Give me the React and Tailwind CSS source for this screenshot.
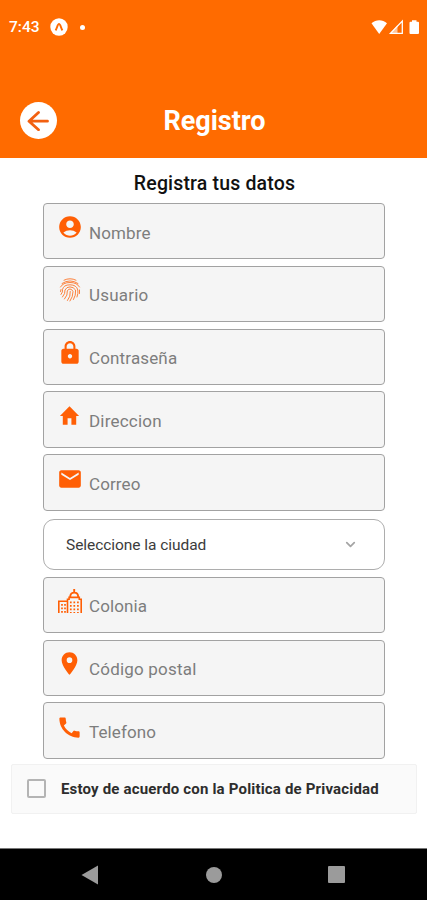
import { useState } from "react";
import {
  MdAccountCircle,
  MdCall,
  MdEmail,
  MdLocationOn,
  MdLock,
} from "react-icons/md";
import { ChevronDown } from "lucide-react";

const HomeIcon = () => (
  <svg width="23" height="26" viewBox="0 0 24 24" preserveAspectRatio="none" fill="currentColor">
    <path d="M10 20v-6h4v6h5v-8h3L12 3 2 12h3v8z" />
  </svg>
);

const FingerprintIcon = () => (
  <svg width="22" height="26" viewBox="0 0 22 26" fill="none" stroke="currentColor" strokeWidth="0.9" strokeLinecap="round" opacity="0.85">
    <path d="M5 3.200Q11 .200 17 3.200M3 6.500Q11 1.200 19 6.500M1.500 10Q4 5.500 11 5.500T20.500 10" />
    <path d="M2 17.500Q4 15 3.500 12.500 4.500 7.800 11 7.800T18.800 13Q19.500 16 18 20" />
    <path d="M3.500 20Q6.500 16.500 6 13 7.500 9.800 11 9.900T16.600 13Q17 18.500 14.500 22.500" />
    <path d="M5.500 22Q9 18 8.300 14 9.200 12 11 12t3 2.500Q14 20 11 24" />
    <path d="M8.500 23.500Q11.800 19.500 11.300 14.500M1.500 14.500 2 12.500M20.500 13v3.500" />
  </svg>
);

const CityIcon = () => (
  <svg width="26" height="26" viewBox="0 0 26 26" fill="none" stroke="currentColor">
    <path strokeWidth="1.6" d="M1.8 25V13.2H10M10.5 25V11.2h1.6V9.4h10.2v1.8h1.9V25" />
    <path strokeWidth="1.9" d="M13.2 9c0-3 1.6-4.4 4-4.4S21.2 6 21.2 9M17.2 4.6V1" />
    <path strokeWidth="1.7" strokeDasharray="1.8 1.7" d="M5 16v9M8 16v9M13.8 13.5V25M17.3 13.5V25M20.9 13.5V25" />
  </svg>
);

const topFields = [
  { label: "Nombre", icon: <MdAccountCircle size={26} />, pos: "top-[10.5px] -left-[0.5px]", text: "tracking-[0.1px]" },
  { label: "Usuario", icon: <FingerprintIcon />, pos: "top-[10px] -left-[0.5px]", text: "tracking-[0.2px]" },
  { label: "Contraseña", icon: <MdLock size={26} />, pos: "top-[10px] -left-[0.5px]", text: "tracking-[0.15px]" },
  { label: "Direccion", icon: <HomeIcon />, pos: "top-[10.5px] -left-[1px]", text: "tracking-[0.2px]" },
  { label: "Correo", icon: <MdEmail size={26} />, pos: "top-[10.5px] -left-[0.5px]", text: "tracking-[0.1px]" },
];

const bottomFields = [
  { label: "Colonia", icon: <CityIcon />, pos: "top-[10.5px] -left-[0.5px]", text: "tracking-[0.1px]" },
  { label: "Código postal", icon: <MdLocationOn size={27} />, pos: "top-[9.5px] -left-[1px]", text: "tracking-[0.2px]" },
  { label: "Telefono", icon: <MdCall size={27} />, pos: "top-[10.5px] -left-[0.5px]", text: "tracking-[0.1px]" },
];

const Field = ({ field }) => (
  <label className="flex h-[56.5px] items-center rounded border border-[#a2a2a2] bg-[#f5f5f5]">
    <span className="flex h-full w-[45px] justify-center pl-[7px] text-[#ff5f05]">
      <span className={`relative h-fit ${field.pos}`}>{field.icon}</span>
    </span>
    <span className={`pt-[3px] text-[17px] leading-5 text-[#7d7d7d] ${field.text}`}>
      {field.label}
    </span>
  </label>
);

const StatusBar = () => (
  <div className="flex h-[54px] items-center pl-[9px] pr-[8px] text-white">
    <span className="w-[32px] pt-[2px] text-[15.5px] font-medium">7:43</span>
    <svg className="ml-[9px]" width="18" height="18" viewBox="0 0 18 18">
      <circle cx="9" cy="9" r="8.7" fill="#fff" />
      <path d="M5.5 12.3C7 10.5 7.5 6 9 6s2 4.5 3.5 6.3" fill="none" stroke="#ff6b00" strokeWidth="1.9" />
    </svg>
    <span className="ml-[12px] size-[5px] rounded-full bg-white" />
    <svg className="ml-auto mr-[-1px]" width="50" height="16" viewBox="0 0 50 16" fill="#fff">
      <path d="M1.500 4.200C6 .200 12.500.200 17 4.200L9.200 15z" />
      <path d="M32.300 2v12.300H20.500z" fill="none" stroke="#fff" strokeWidth="1.3" />
      <path d="M27.500 6 19.500 15h8z" fill="#fff" fillOpacity="0.6" />
      <path d="M40.500 2.800h1.500V1.300h4.500V2.800h1.500q1 0 1 1v10.200q0 1-1 1h-7.500q-1 0-1-1V3.800q0-1 1-1z" />
    </svg>
  </div>
);

const NavigationBar = () => (
  <div className="mt-auto flex h-[52px] items-center border-t border-[#777] bg-black pl-[81px] text-[#9b9b9b]">
    <svg width="17" height="20" viewBox="0 0 17 20" fill="currentColor">
      <path d="M.5 10 17 .5v19z" />
    </svg>
    <span className="ml-[108px] size-4 rounded-full bg-[#9b9b9b]" />
    <span className="ml-[106px] size-[17px] rounded-[1px] bg-[#9b9b9b]" />
  </div>
);

export default function App() {
  const [accepted, setAccepted] = useState(false);

  return (
    <div className="flex h-[900px] w-[427px] flex-col overflow-hidden bg-white font-['Roboto',sans-serif]">
      <header className="h-[158px] bg-[#ff6b00]">
        <StatusBar />
        <div className="mt-[48px] grid grid-cols-[80px_1fr_80px] items-center">
          <button className="ml-[19.5px] flex size-[37px] items-center justify-center rounded-full bg-white text-[#f26011]">
            <svg width="22" height="20" viewBox="0 0 22 20" fill="none" stroke="currentColor" strokeWidth="2.8" strokeLinecap="round" strokeLinejoin="round">
              <path d="M11.5 1.500 2 10.200l9.500 8.500M2.500 10.200H20.500" />
            </svg>
          </button>
          <h1 className="pl-0.5 text-center text-[27px] font-bold leading-8 text-white">Registro</h1>
        </div>
      </header>

      <main className="px-[11px]">
        <h2 className="mt-[14px] pl-0.5 text-center text-[19.5px] font-medium leading-6 tracking-[0.17px] text-[#111]">
          Registra tus datos
        </h2>
        <div className="ml-8 mt-[6.8px] flex w-[342px] flex-col gap-[6.4px]">
          {topFields.map((field) => (
            <Field key={field.label} field={field} />
          ))}
          <button className="mt-[2px] flex h-[51px] items-center justify-between rounded-[11px] border border-[#adadad] bg-white pl-[22px] pr-[26px] text-[15.5px] tracking-[-0.05px] text-[#3c3c3c]">
            <span className="pt-[1px]">Seleccione la ciudad</span>
            <ChevronDown size={15} strokeWidth={2.8} color="#a5a5a5" />
          </button>
          {bottomFields.map((field) => (
            <Field key={field.label} field={field} />
          ))}
        </div>
        <label className="mt-[5px] flex h-[50px] w-[406px] items-center rounded-[2px] border border-[#f1f1f1] bg-[#fafafa] pl-[15px]">
          <input
            type="checkbox"
            checked={accepted}
            onChange={() => setAccepted(!accepted)}
            className="size-[19px] appearance-none rounded-[2px] border-2 border-[#b4b4b4] checked:bg-[#ff6b00]"
          />
          <span className="ml-[15px] pt-[1px] text-[15px] font-bold tracking-[0.18px] text-[#2d2d2d]">
            Estoy de acuerdo con la Politica de Privacidad
          </span>
        </label>
      </main>

      <NavigationBar />
    </div>
  );
}
